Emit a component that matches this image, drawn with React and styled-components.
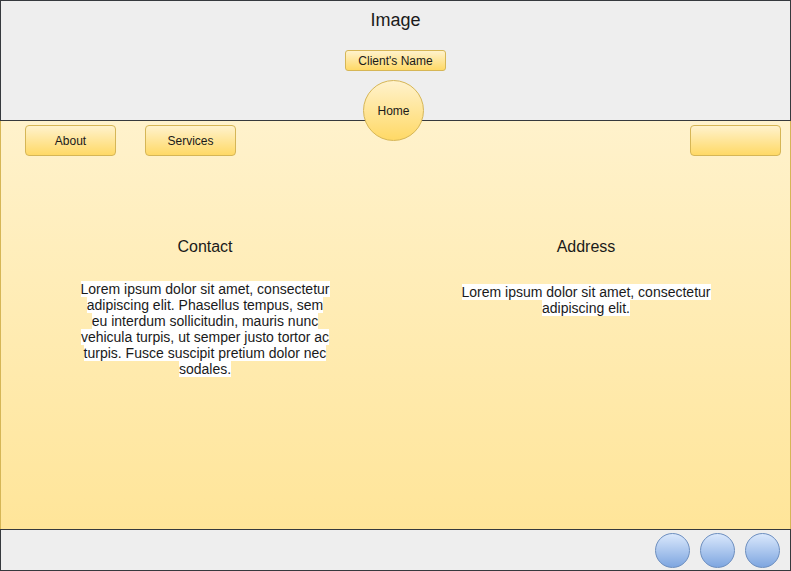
import React from 'react'
import styled, { createGlobalStyle } from 'styled-components'

const Global = createGlobalStyle`
  body {
    margin: 0;
    background: #ffffff;
    font-family: "Liberation Sans", Arial, Helvetica, sans-serif;
  }
`

const Page = styled.div`
  position: relative;
  width: 791px;
  height: 571px;
  display: flex;
  flex-direction: column;
  color: #1a1a1a;
`

const Header = styled.header`
  box-sizing: border-box;
  height: 121px;
  background: #eeeeee;
  border: 1px solid #36393d;
  display: flex;
  flex-direction: column;
  align-items: center;
`

const Title = styled.div`
  margin-top: 9px;
  font-size: 18px;
  line-height: 21px;
`

const yellow = `
  background: linear-gradient(to bottom, #fff2cc 0%, #ffd966 100%);
  border: 1px solid #d6b656;
  box-sizing: border-box;
  color: #1a1a1a;
  font-family: inherit;
  font-size: 12px;
  display: flex;
  align-items: center;
  justify-content: center;
`

const NameTag = styled.div`
  ${yellow}
  margin-top: 19px;
  width: 101px;
  height: 21px;
  border-radius: 3px;
`

const HomeBubble = styled.div`
  ${yellow}
  position: absolute;
  left: 363px;
  top: 80px;
  width: 61px;
  height: 61px;
  border-radius: 50%;
`

const Main = styled.main`
  box-sizing: border-box;
  height: 408px;
  background: linear-gradient(to bottom, #fff2cc 0%, #ffe599 100%);
  border-left: 1px solid #d6b656;
  border-right: 1px solid #d6b656;
  display: flex;
  flex-direction: column;
`

const Nav = styled.nav`
  display: flex;
  padding: 4px 9px 0 24px;
`

const NavButton = styled.div`
  ${yellow}
  width: 91px;
  height: 31px;
  border-radius: 4px;
  margin-left: ${p => p.$gap || 0}px;
`

const Spacer = styled.div`
  flex: 1;
`

const Columns = styled.div`
  display: grid;
  grid-template-columns: 250px 250px;
  column-gap: 131px;
  padding-left: 79px;
  margin-top: 82px;
`

const Block = styled.section`
  display: flex;
  flex-direction: column;
  align-items: center;
  text-align: center;
`

const Heading = styled.div`
  font-size: 16px;
  line-height: 18px;
`

const Para = styled.p`
  margin: ${p => p.$offset}px 0 0;
  font-size: 14px;
  line-height: 16px;
  span {
    background: #ffffff;
  }
`

const Footer = styled.footer`
  box-sizing: border-box;
  height: 42px;
  background: #eeeeee;
  border: 1px solid #36393d;
  display: flex;
  justify-content: flex-end;
  align-items: center;
  gap: 10px;
  padding-right: 10px;
`

const Dot = styled.div`
  box-sizing: border-box;
  width: 35px;
  height: 35px;
  border-radius: 50%;
  background: linear-gradient(to bottom, #dae8fc 0%, #7ea6e0 100%);
  border: 1px solid #6c8ebf;
`

export default function App() {
  return (
    <Page>
      <Global />
      <Header>
        <Title>Image</Title>
        <NameTag>Client's Name</NameTag>
      </Header>
      <Main>
        <Nav>
          <NavButton>About</NavButton>
          <NavButton $gap={29}>Services</NavButton>
          <Spacer />
          <NavButton />
        </Nav>
        <Columns>
          <Block>
            <Heading>Contact</Heading>
            <Para $offset={25}>
              <span>
                Lorem ipsum dolor sit amet, consectetur adipiscing elit. Phasellus tempus, sem eu interdum
                sollicitudin, mauris nunc vehicula turpis, ut semper justo tortor ac turpis. Fusce suscipit
                pretium dolor nec sodales.
              </span>
            </Para>
          </Block>
          <Block>
            <Heading>Address</Heading>
            <Para $offset={28}>
              <span>Lorem ipsum dolor sit amet, consectetur adipiscing elit.</span>
            </Para>
          </Block>
        </Columns>
      </Main>
      <Footer>
        <Dot />
        <Dot />
        <Dot />
      </Footer>
      <HomeBubble>Home</HomeBubble>
    </Page>
  )
}
